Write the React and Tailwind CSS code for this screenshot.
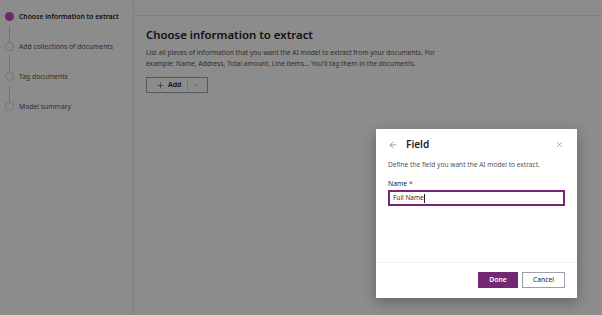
import { ArrowLeft, X, Plus, ChevronDown } from 'lucide-react'

const steps = [
  'Choose information to extract',
  'Add collections of documents',
  'Tag documents',
  'Model summary',
]

function Stepper() {
  return (
    <ul className="pt-[11px]">
      {steps.map((label, i) => (
        <li key={label} className="relative flex items-start h-[30px]">
          {i < steps.length - 1 && (
            <span className="absolute left-[8.5px] top-[15px] w-px h-[21px] bg-gray-300" />
          )}
          <span
            className={`ml-[4.5px] mt-[1px] w-[9px] h-[9px] rounded-full shrink-0 ${
              i === 0 ? 'bg-[#c04fc0]' : 'border border-gray-300 bg-white'
            }`}
          />
          <span
            className={`ml-[5.5px] text-[6.8px] leading-[11px] ${
              i === 0 ? 'font-semibold text-[#222]' : 'text-[#555]'
            }`}
          >
            {label}
          </span>
        </li>
      ))}
    </ul>
  )
}

export default function App() {
  return (
    <div
      className="relative w-[602px] h-[315px] overflow-hidden bg-white flex"
      style={{ fontFamily: '"Noto Sans", "Open Sans", sans-serif' }}
    >
      <aside className="w-[134px] shrink-0 border-r border-gray-200">
        <Stepper />
      </aside>

      <main className="flex-1 flex flex-col">
        <div className="h-[16px] border-b border-gray-200" />
        <div className="pl-[12px] pt-[11px]">
          <h1 className="text-[11.4px] font-semibold leading-[16px] text-[#222]">
            Choose information to extract
          </h1>
          <p className="mt-[4px] w-[300px] text-[6.65px] leading-[11px] text-[#555]">
            List all pieces of information that you want the AI model to extract from your documents. For
            example: Name, Address, Total amount, Line items... You'll tag them in the documents.
          </p>
          <button
            type="button"
            className="mt-[8px] h-[16px] w-[62px] flex items-center border border-gray-400 bg-white text-[#222]"
          >
            <span className="flex items-center gap-[3px] pl-[9px] pr-[6px] text-[7px] font-semibold">
              <Plus size={9} strokeWidth={1.3} />
              Add
            </span>
            <span className="h-[9px] w-px bg-gray-300" />
            <span className="px-[4px] flex items-center">
              <ChevronDown size={8} strokeWidth={1.3} className="text-gray-500" />
            </span>
          </button>
        </div>
      </main>

      <div className="absolute inset-0 bg-black/[0.45]" />

      <div className="absolute left-[376px] top-[129px] w-[201px] h-[169px] bg-white shadow-[0_4px_12px_rgba(0,0,0,0.3)] flex flex-col">
        <div className="flex items-center h-[30px] pl-[12px] pr-[13px] pt-[1px]">
          <ArrowLeft size={10} strokeWidth={1.2} className="text-[#444]" />
          <span className="ml-[8px] text-[10px] font-semibold text-[#222]">Field</span>
          <X size={9} strokeWidth={1.2} className="ml-auto text-[#555]" />
        </div>
        <p className="px-[12px] mt-[1px] text-[6.6px] leading-[10px] text-[#555]">
          Define the field you want the AI model to extract.
        </p>
        <label className="px-[12px] mt-[9px] text-[6.8px] leading-[10px] text-[#222]">
          Name <span className="text-[#a4262c]">*</span>
        </label>
        <div className="mx-[12px] mt-[1px] h-[16px] border-2 border-[#742774] flex items-center px-[3px] text-[6.5px] text-[#333]">
          Full Name
          <span className="w-px h-[9px] bg-[#222]" />
        </div>
        <div className="mt-auto h-[36px] border-t border-gray-100 flex items-center justify-end gap-[4px] pr-[12px] pb-[1px]">
          <button
            type="button"
            className="w-[40px] h-[16px] bg-[#742774] text-white text-[6.8px] font-semibold"
          >
            Done
          </button>
          <button
            type="button"
            className="w-[43px] h-[16px] border border-gray-400 bg-white text-[#222] text-[6.8px]"
          >
            Cancel
          </button>
        </div>
      </div>
    </div>
  )
}
